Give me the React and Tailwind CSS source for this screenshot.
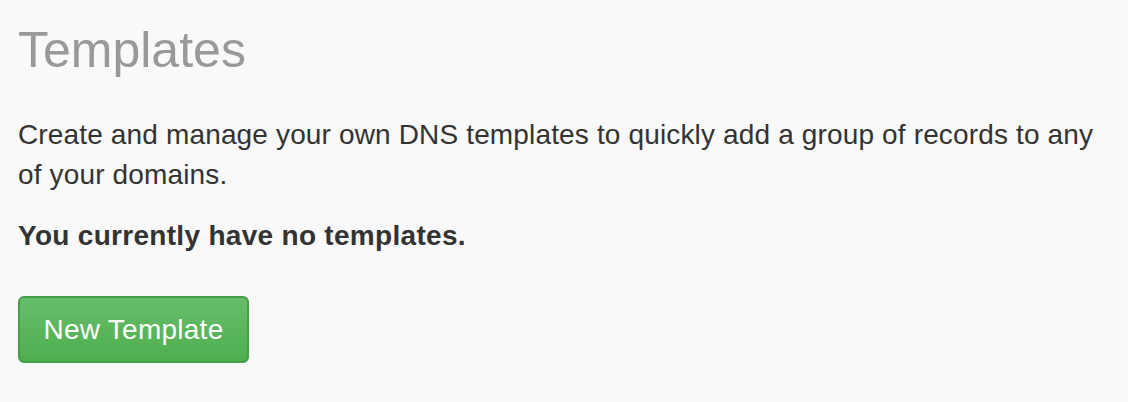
import React from 'react';

const App = () => {
  return (
    <div className="min-h-screen bg-[#f9f9f9] font-['Liberation_Sans',Arial,sans-serif]">
      <div className="px-[18px] pt-[23px] w-[1126px]">
        {/* Heading */}
        <h1 className="text-[50px] leading-[55px] font-normal text-[#999999]">Templates</h1>

        {/* Description */}
        <p className="mt-[37px] text-[28px] leading-[40px] tracking-[0.15px] text-[#333333]">
          Create and manage your own DNS templates to quickly add a group of records to any of your domains.
        </p>
        <p className="mt-[21px] text-[28px] leading-[40px] tracking-[0.3px] font-bold text-[#333333]">
          You currently have no templates.
        </p>

        {/* Action */}
        <button className="mt-[40px] w-[231px] h-[67px] rounded-[6px] border-2 border-[#43a046] bg-gradient-to-b from-[#68be6b] to-[#4cae4f] text-[28px] tracking-[0.25px] text-white">
          New Template
        </button>
      </div>
    </div>
  );
};

export default App;
